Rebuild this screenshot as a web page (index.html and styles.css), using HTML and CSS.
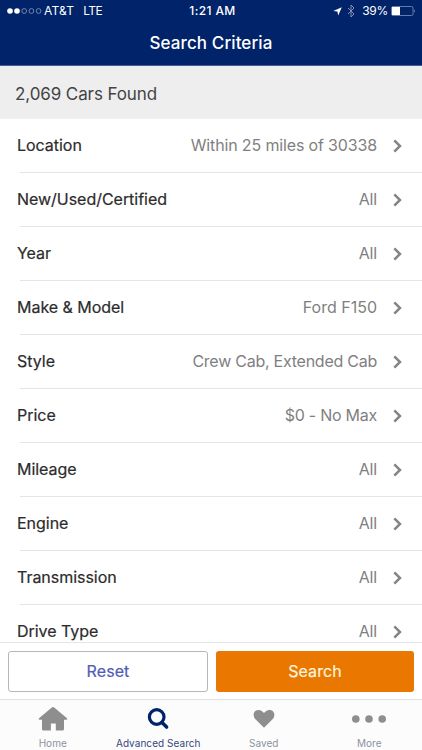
FILE: index.html
```html
<!DOCTYPE html>
<html lang="en">
<head>
<meta charset="utf-8">
<title>Search Criteria</title>
<link rel="stylesheet" href="styles.css">
</head>
<body>
<div class="app">
  <header class="header">
    <div class="status">
      <div class="status-left">
        <svg class="signal" width="36" height="8" viewBox="0 0 36 8"><g fill="#fff"><circle cx="3" cy="4" r="2.8"/><circle cx="10" cy="4" r="2.8"/></g><g fill="none" stroke="#8e9abf" stroke-width=".8"><circle cx="17.2" cy="4" r="2.4"/><circle cx="24.4" cy="4" r="2.4"/><circle cx="31.6" cy="4" r="2.4"/></g></svg>
        <span class="carrier">AT&amp;T</span>
        <span class="network">LTE</span>
      </div>
      <span class="time">1:21 AM</span>
      <div class="status-right">
        <svg class="arrow" width="9" height="9" viewBox="0 0 9 9"><path d="M8.800.2 5.200 8.600 4.400 4.600.3 4z" fill="#fff"/></svg>
        <svg class="bluetooth" width="8" height="14" viewBox="0 0 8 14"><path d="M1 4l6 6-3 3V1l3 3-6 6" fill="none" stroke="#8591b9" stroke-width="1"/></svg>
        <span class="percent">39%</span>
        <svg class="battery" width="25" height="10" viewBox="0 0 25 10"><rect x=".5" y=".5" width="21.5" height="9" rx="1.5" fill="none" stroke="#8591b9" stroke-width=".8"/><path d="M1 1h8v8H1z" fill="#fff"/><path d="M23.3 3.5q1.2 1.5 0 3z" fill="#fff"/></svg>
      </div>
    </div>
    <h1 class="title">Search Criteria</h1>
  </header>
  <div class="count"><span>2,069 Cars Found</span></div>
  <main class="list">
    <div class="row"><span class="label">Location</span><span class="value">Within 25 miles of 30338</span><svg class="chevron" viewBox="0 0 9 14"><path d="M1.3 1.3 7 7l-5.700 5.700"/></svg></div>
    <div class="row"><span class="label">New/Used/Certified</span><span class="value">All</span><svg class="chevron" viewBox="0 0 9 14"><path d="M1.3 1.3 7 7l-5.700 5.700"/></svg></div>
    <div class="row"><span class="label">Year</span><span class="value">All</span><svg class="chevron" viewBox="0 0 9 14"><path d="M1.3 1.3 7 7l-5.700 5.700"/></svg></div>
    <div class="row"><span class="label">Make &amp; Model</span><span class="value loose">Ford F150</span><svg class="chevron" viewBox="0 0 9 14"><path d="M1.3 1.3 7 7l-5.700 5.700"/></svg></div>
    <div class="row"><span class="label">Style</span><span class="value tight">Crew Cab, Extended Cab</span><svg class="chevron" viewBox="0 0 9 14"><path d="M1.3 1.3 7 7l-5.700 5.700"/></svg></div>
    <div class="row"><span class="label">Price</span><span class="value tight">$0 - No Max</span><svg class="chevron" viewBox="0 0 9 14"><path d="M1.3 1.3 7 7l-5.700 5.700"/></svg></div>
    <div class="row"><span class="label">Mileage</span><span class="value">All</span><svg class="chevron" viewBox="0 0 9 14"><path d="M1.3 1.3 7 7l-5.700 5.700"/></svg></div>
    <div class="row"><span class="label">Engine</span><span class="value">All</span><svg class="chevron" viewBox="0 0 9 14"><path d="M1.3 1.3 7 7l-5.700 5.700"/></svg></div>
    <div class="row"><span class="label">Transmission</span><span class="value">All</span><svg class="chevron" viewBox="0 0 9 14"><path d="M1.3 1.3 7 7l-5.700 5.700"/></svg></div>
    <div class="row"><span class="label">Drive Type</span><span class="value">All</span><svg class="chevron" viewBox="0 0 9 14"><path d="M1.3 1.3 7 7l-5.700 5.700"/></svg></div>
  </main>
  <div class="actions">
    <button class="btn reset">Reset</button>
    <button class="btn search">Search</button>
  </div>
  <nav class="tabs">
    <a class="tab"><svg width="30" height="26" viewBox="0 0 30 26"><path d="M13.800 1.500q1.200-1 2.400 0L29 12.300q.9 1.200-.6 1.400H26V23q0 1.500-1.500 1.500h-6.700V17.500h-4.900v7H5.500Q4 24.500 4 23v-9.300H1.600Q0 13.500 1 12.300z" fill="#8e8e8e"/></svg><span>Home</span></a>
    <a class="tab active"><svg width="30" height="26" viewBox="0 0 30 26"><g fill="none" stroke="#00226b"><circle cx="13.700" cy="11" r="7.300" stroke-width="3.200"/><path d="M19 16.500l4.600 4.500" stroke-width="3.600" stroke-linecap="round"/></g></svg><span>Advanced Search</span></a>
    <a class="tab"><svg width="30" height="26" viewBox="0 0 30 26"><path d="M15 21.800 6.700 13.600C3 9.800 4.400 4 9.500 4c2.500 0 4.300 1.400 5.500 3.100C16.200 5.400 18 4 20.500 4c5.100 0 6.500 5.800 2.800 9.600z" fill="#8e8e8e"/></svg><span>Saved</span></a>
    <a class="tab"><svg width="36" height="26" viewBox="0 0 36 26"><g fill="#8e8e8e"><circle cx="4.800" cy="13" r="3.800"/><circle cx="18" cy="13" r="3.800"/><circle cx="31.200" cy="13" r="3.800"/></g></svg><span>More</span></a>
  </nav>
</div>
</body>
</html>
```
FILE: styles.css
```css
* { box-sizing: border-box; }
body { margin: 0; font-family: Inter, "Liberation Sans", sans-serif; background: #fff; }
.app { width: 422px; height: 750px; display: flex; flex-direction: column; overflow: hidden; }
.header { height: 66px; flex: none; background: #002369; border-bottom: 1px solid #485a91; color: #fff; }
.status { height: 22px; display: grid; grid-template-columns: 1fr auto 1fr; align-items: center; padding: 0 6px; font-size: 12px; line-height: 22px; }
.status-left, .status-right { display: flex; align-items: center; }
.status-left { padding-left: 1px; }
.status-right { justify-content: flex-end; }
.carrier { margin-left: 1px; letter-spacing: .2px; }
.network { margin-left: 9px; letter-spacing: -.6px; }
.time { padding-left: 3px; font-weight: 500; letter-spacing: .4px; }
.bluetooth { margin: 0 7px 0 5px; }
.percent { margin-right: 3px; letter-spacing: -.3px; }
.title { margin: 0; text-align: center; font-size: 17px; line-height: 43px; font-weight: 500; letter-spacing: .1px; }
.count { height: 53px; flex: none; background: #eee; padding-left: 15px; font-size: 17px; line-height: 56px; letter-spacing: -.1px; color: #444; }
.list { flex: 1; min-height: 0; overflow: hidden; }
.row { height: 54px; display: flex; align-items: center; padding: 0 20px 1px 17px; background: linear-gradient(#e5e5e5, #e5e5e5) 20px 53px / 402px 1px no-repeat; font-size: 16px; line-height: 53px; }
.label { color: #2c2c2c; font-weight: 400; letter-spacing: -.03px; -webkit-text-stroke: .2px #2c2c2c; }
.value { margin-left: auto; color: #7f7f7f; letter-spacing: -.15px; }
.tight { letter-spacing: -.25px; }
.loose { letter-spacing: 0; }
.chevron { width: 9px; height: 14px; margin-left: 16px; fill: none; stroke: #858585; stroke-width: 2.5; }
.actions { height: 57px; flex: none; display: flex; gap: 8px; padding: 8px; background: #fff; border-top: 1px solid #e5e5e5; }
.btn { flex: 1; height: 41px; margin: 0; padding: 0; border-radius: 3px; font: 400 16px/39px Inter, sans-serif; letter-spacing: .08px; -webkit-text-stroke: .2px currentColor; }
.reset { color: #505cb5; background: #fff; border: 1px solid #b7b7b7; }
.search { color: #fff6df; background: #e97700; border: 0; }
.tabs { height: 51px; flex: none; display: flex; background: #fcfcfc; border-top: 1px solid #dce2e5; }
.tab { flex: 1 1 0; display: flex; flex-direction: column; align-items: center; padding-top: 6px; color: #8c929d; font-size: 10px; line-height: 14px; }
.tab span { margin-top: 4px; white-space: nowrap; letter-spacing: .05px; }
.active { color: #35477c; }
```
